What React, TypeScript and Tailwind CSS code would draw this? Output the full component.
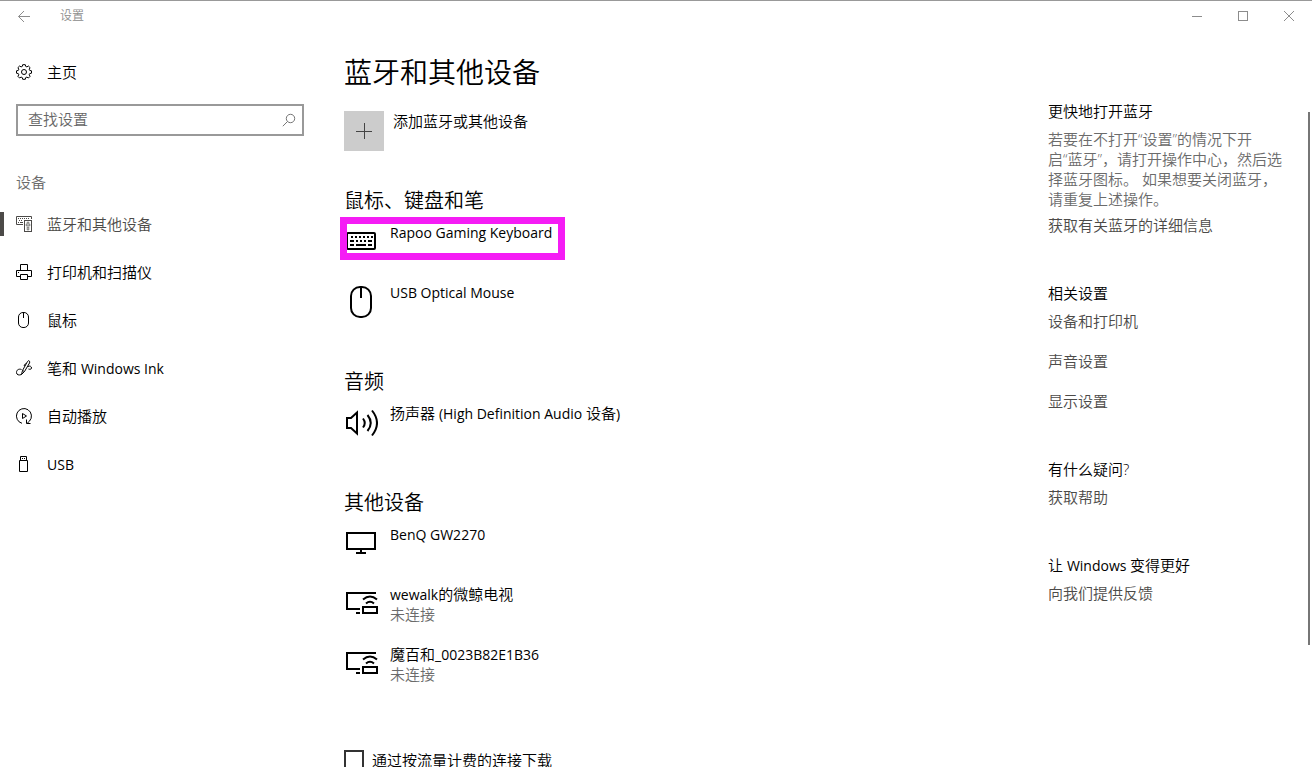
import React from "react";

type IconProps = { className?: string };

function Svg({ size, children, className = "" }: { size: number; children: React.ReactNode; className?: string }) {
  return (
    <svg
      width={size}
      height={size}
      viewBox={`0 0 ${size} ${size}`}
      fill="none"
      stroke="currentColor"
      aria-hidden="true"
      className={`shrink-0 ${className}`}
    >
      {children}
    </svg>
  );
}

const BackIcon = () => (
  <Svg size={12}>
    <path d="M0.5 6.5H12M6 1L0.5 6.5L6 12" />
  </Svg>
);

const GearIcon = () => (
  <Svg size={16}>
    <circle cx="8" cy="8" r="2.5" />
    <path d="M6.7 0.7h2.6l.4 1.7 1.2.5 1.5-.9 1.7 1.7-.9 1.5.5 1.2 1.8.4v2.4l-1.8.4-.5 1.2.9 1.5-1.7 1.7-1.5-.9-1.2.5-.4 1.7H6.7l-.4-1.7-1.2-.5-1.5.9-1.7-1.7.9-1.5-.5-1.2L.5 9.2V6.8l1.8-.4.5-1.2-.9-1.5 1.7-1.7 1.5.9 1.2-.5z" />
  </Svg>
);

const SearchIcon = () => (
  <Svg size={14}>
    <circle cx="8.5" cy="5.5" r="4.2" strokeWidth="0.9" />
    <path d="M5.5 8.5L0.8 13.2" strokeWidth="0.9" />
  </Svg>
);

const DevicesIcon = () => (
  <Svg size={16}>
    <path d="M7 8.5H0.5V0.5H15.5V3" />
    <path d="M2 2.5H14M3 4.5H7" strokeDasharray="1 1" />
    <path d="M2 6.5H3M4 6.5H7" />
    <rect x="8.5" y="4.5" width="7" height="11" />
    <path d="M11 6H13V8H14V10H10V8H11ZM11 11H13V14H11Z" fill="currentColor" fillOpacity="0.4" strokeOpacity="0.4" />
  </Svg>
);

const PrinterIcon = () => (
  <Svg size={16}>
    <path d="M4.5 6V0.5H11.5V6M4.5 12.5H0.5V6.5H15.5V12.5H11.5M4.5 10.5H11.5V15.5H4.5ZM2 8.5H3" />
  </Svg>
);

const MouseSmallIcon = () => (
  <Svg size={16}>
    <rect x="2.5" y="0.5" width="10" height="15" rx="4.5" />
    <path d="M7.5 0.5V6" />
  </Svg>
);

const PenIcon = () => (
  <Svg size={16}>
    <path d="M5.5 14.5L6.5 10.5L11.5 1.5Q12.5 0 13.5 1.2Q14 2 13.5 3L8.5 11.5L5.5 14.5M6.5 10.5L8.5 11.5M9.5 3.5L8 6" />
    <path d="M5.5 9.5C2.5 8.5 0.5 10 0.5 12.5C0.5 15 3 15.5 5.5 14.5M12 6.5C14 5.5 15.5 6.5 15.5 8C15.5 9.5 13.5 9.5 12.5 9" />
  </Svg>
);

const AutoplayIcon = () => (
  <Svg size={16}>
    <path d="M6 15.3A7.5 7.5 0 1 1 13.5 13.1L11 15.5M10.5 11.5V15.5H14.5" />
    <path d="M6.5 5.5V10.5L10.5 8Z" />
  </Svg>
);

const UsbIcon = () => (
  <Svg size={16}>
    <path d="M3.5 4.5H11.5V15.5H3.5ZM4.5 4.5V0.5H10.5V4.5" />
    <path d="M6 2.5H7M8 2.5H9" />
  </Svg>
);

const KeyboardIcon = () => (
  <Svg size={32}>
    <rect x="1" y="7" width="28" height="16" rx="1" strokeWidth="2" />
    <g strokeWidth="2">
      <path d="M5 11H27" strokeDasharray="2 2" />
      <path d="M4 15H8M10 15H12M14 15H16M18 15H20M22 15H26" />
      <path d="M4 19H8M10 19H20M22 19H26" />
    </g>
  </Svg>
);

const MouseIcon = () => (
  <Svg size={32}>
    <rect x="5" y="1" width="20" height="30" rx="9" strokeWidth="2" />
    <path d="M15 1V12" strokeWidth="2" />
  </Svg>
);

const SpeakerIcon = () => (
  <Svg size={32}>
    <path d="M1 11H5L11 5.5V26.5L5 21H1Z" strokeWidth="2" />
    <path d="M17 11.5Q20.500 16 17 20.500M21.500 8Q28 16 21.500 24M26 3.500Q36 16 26 28.500" strokeWidth="2" />
  </Svg>
);

const MonitorIcon = () => (
  <Svg size={32}>
    <path d="M1 5H29V21H1ZM15 21V25M10 25H20" strokeWidth="2" />
  </Svg>
);

const CastIcon = () => (
  <Svg size={32}>
    <path d="M30 5H1V21H14M10 25H14M17 19H31V25H17Z" strokeWidth="2" />
    <path d="M17 11.5Q24 5.500 31 11.500M20 15.500Q24 12 28 15.500" strokeWidth="2" />
  </Svg>
);

const navItems: { label: string; icon: React.FC<IconProps>; active?: boolean }[] = [
  { label: "蓝牙和其他设备", icon: DevicesIcon, active: true },
  { label: "打印机和扫描仪", icon: PrinterIcon },
  { label: "鼠标", icon: MouseSmallIcon },
  { label: "笔和 Windows Ink", icon: PenIcon },
  { label: "自动播放", icon: AutoplayIcon },
  { label: "USB", icon: UsbIcon },
];

type Device = { name: string; icon: React.FC<IconProps>; status?: string; marked?: boolean };

const groups: { title: string; devices: Device[] }[] = [
  {
    title: "鼠标、键盘和笔",
    devices: [
      { name: "Rapoo Gaming Keyboard", icon: KeyboardIcon, marked: true },
      { name: "USB Optical Mouse", icon: MouseIcon },
    ],
  },
  { title: "音频", devices: [{ name: "扬声器 (High Definition Audio 设备)", icon: SpeakerIcon }] },
  {
    title: "其他设备",
    devices: [
      { name: "BenQ GW2270", icon: MonitorIcon },
      { name: "wewalk的微鲸电视", icon: CastIcon, status: "未连接" },
      { name: "魔百和_0023B82E1B36", icon: CastIcon, status: "未连接" },
    ],
  },
];

/* Latin runs are set one step smaller than the Chinese text around them. */
function Mixed({ text }: { text: string }) {
  return (
    <>
      {text.split(/([A-Za-z0-9_()][A-Za-z0-9_() ]*)/).map((part, i) =>
        i % 2 ? (
          <span key={i} className="text-sm leading-none font-normal">
            {part}
          </span>
        ) : (
          part
        ),
      )}
    </>
  );
}

function DeviceRow({ name, icon: Icon, status, marked }: Device) {
  return (
    <li className="relative h-15">
      <button type="button" className="flex gap-3 pl-0.5 text-left">
        <span className="pt-1">
          <Icon />
        </span>
        <span className="flex flex-col">
          <span className="h-5 whitespace-nowrap">
            <Mixed text={name} />
          </span>
          {status && <span className="text-[#6b6b6b]">{status}</span>}
        </span>
      </button>
      {marked && (
        <span className="pointer-events-none absolute -top-[5px] -left-1 h-[43px] w-[225px] border-7 border-[#f51cf5]" />
      )}
    </li>
  );
}

function SideSection({ title, links, children }: { title: string; links: string[]; children?: React.ReactNode }) {
  return (
    <section>
      <h3 className="h-5">
        <Mixed text={title} />
      </h3>
      {children}
      <ul className={children ? "mt-1.5" : "mt-2 flex flex-col gap-5"}>
        {links.map((link) => (
          <li key={link}>
            <a href="#" className="block text-[#4c4a48]">
              {link}
            </a>
          </li>
        ))}
      </ul>
    </section>
  );
}

export default function App() {
  return (
    <div className="flex h-screen flex-col overflow-hidden border-t border-[#999] bg-white font-['Open_Sans','Noto_Sans_CJK_SC',sans-serif] text-[15px] leading-5 font-[350] text-black">
      <header className="mb-0.5 flex h-[29px] shrink-0 items-center text-[#8c8c8c]">
        <button type="button" aria-label="返回" className="flex w-12 justify-center">
          <BackIcon />
        </button>
        <span className="ml-3 text-xs">设置</span>
        <div className="ml-auto flex">
          <button type="button" aria-label="最小化" className="flex w-[46px] justify-center">
            <Svg size={10}>
              <path d="M0 5.5H10" />
            </Svg>
          </button>
          <button type="button" aria-label="最大化" className="flex w-[46px] justify-center">
            <Svg size={10}>
              <rect x="0.5" y="0.5" width="9" height="9" />
            </Svg>
          </button>
          <button type="button" aria-label="关闭" className="flex w-[46px] justify-center">
            <Svg size={10}>
              <path d="M0 0L10 10M10 0L0 10" />
            </Svg>
          </button>
        </div>
      </header>

      <div className="flex min-h-0 flex-1">
        <aside className="w-80 shrink-0 pt-5">
          <button type="button" className="flex h-10 items-center gap-[15px] pl-4">
            <GearIcon />
            主页
          </button>
          <label className="mx-4 mt-3 flex h-8 items-center border-2 border-[#999] pr-1.5 pl-2.5 text-[#666]">
            <input
              type="search"
              aria-label="查找设置"
              placeholder="查找设置"
              className="min-w-0 flex-1 pb-0.5 outline-none placeholder:text-[#666]"
            />
            <SearchIcon />
          </label>
          <h2 className="mt-9 mb-2 pl-4 text-[#6b6b6b]">设备</h2>
          <nav>
            {navItems.map(({ label, icon: Icon, active }) => (
              <a
                key={label}
                href="#"
                aria-current={active ? "page" : undefined}
                className={`flex h-12 items-center ${active ? "text-[#4c4a48]" : ""}`}
              >
                <span className={`mr-3 h-6 w-1 ${active ? "bg-[#4c4a48]" : ""}`} />
                <Icon />
                <span className="ml-[15px]">
                  <Mixed text={label} />
                </span>
              </a>
            ))}
          </nav>
        </aside>

        <main className="min-w-0 flex-1 pt-5 pl-6">
          <h1 className="text-[28px] leading-10">蓝牙和其他设备</h1>
          <button type="button" className="mt-[19px] flex gap-[9px] text-left">
            <span className="flex size-10 items-center justify-center bg-[#ccc] text-[#444]">
              <Svg size={16}>
                <path d="M0 8.5H16M8.5 0V16" />
              </Svg>
            </span>
            添加蓝牙或其他设备
          </button>
          <div className="mt-9 flex flex-col gap-[26px]">
            {groups.map((group) => (
              <section key={group.title}>
                <h2 className="mb-[7px] text-xl leading-7">{group.title}</h2>
                <ul>
                  {group.devices.map((device) => (
                    <DeviceRow key={device.name} {...device} />
                  ))}
                </ul>
              </section>
            ))}
          </div>
          <label className="mt-[46px] flex items-center gap-2">
            <input type="checkbox" className="size-5 appearance-none border-2 border-[#333]" />
            通过按流量计费的连接下载
          </label>
        </main>

        <aside className="mr-5 flex w-60 shrink-0 flex-col pt-[69px]">
          <SideSection title="更快地打开蓝牙" links={["获取有关蓝牙的详细信息"]}>
            <p className="mt-2 whitespace-nowrap text-[#6b6b6b]">
              若要在不打开“设置”的情况下开
              <br />
              启“蓝牙”，请打开操作中心，然后选
              <br />
              择蓝牙图标。 如果想要关闭蓝牙，
              <br />
              请重复上述操作。
            </p>
          </SideSection>
          <div className="mt-12 flex flex-col gap-12">
            <SideSection title="相关设置" links={["设备和打印机", "声音设置", "显示设置"]} />
            <SideSection title="有什么疑问?" links={["获取帮助"]} />
            <SideSection title="让 Windows 变得更好" links={["向我们提供反馈"]} />
          </div>
        </aside>
        <div className="mt-20 mr-0.5 h-[533px] w-0.5 shrink-0 bg-[#767676]" />
      </div>
    </div>
  );
}
